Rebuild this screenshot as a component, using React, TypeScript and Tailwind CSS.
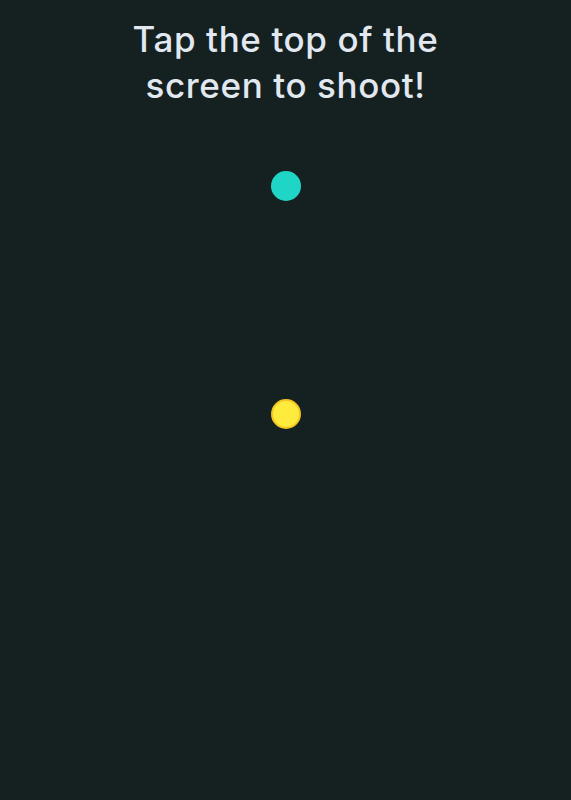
import React from 'react';

// Simple shooter screen: hint text, target dot and player dot
export default function App() {
  return (
    <div
      className="h-[800px] w-full bg-[#152021] flex flex-col items-center text-[#e2e8f0]"
      style={{ fontFamily: 'Inter, "Open Sans", sans-serif' }}
    >
      <h1 className="mt-[16px] text-center text-[35px] leading-[46px] font-medium tracking-[0.6px]">
        Tap the top of the
        <br />
        screen to shoot!
      </h1>
      <div className="mt-[63px] h-[30px] w-[30px] rounded-full bg-[#1fd6c6]" />
      <div className="mt-[198px] h-[30px] w-[30px] rounded-full bg-[#ffeb3b] border-2 border-[#f3c623]" />
    </div>
  );
}
